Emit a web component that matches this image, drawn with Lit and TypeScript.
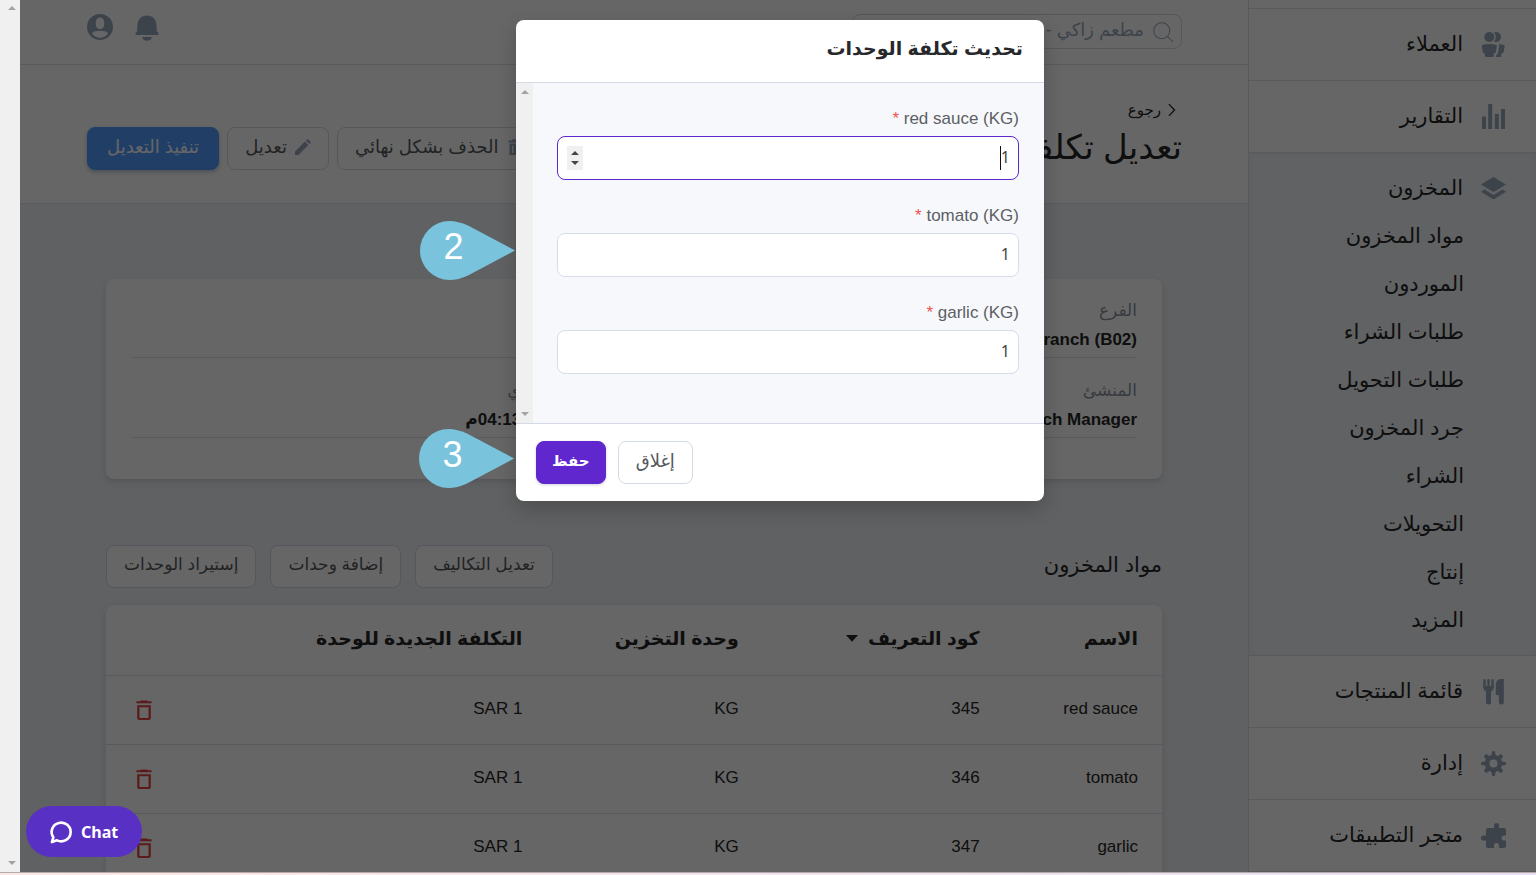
import { LitElement, html, css, svg, nothing } from "lit";
import { customElement, property } from "lit/decorators.js";

const icons: Record<string, unknown> = {
  users: svg`<circle cx="8.3" cy="5" r="5"/><path d="M0.8 13.2Q4 12 8.300 12T15.900 13.200L15 19.500Q14.800 21 14 21L13 21.500L12.500 25H4.200L3.700 21.500L2.500 21Q1.800 20.800 1.600 19.500Z"/><path d="M12.800 0.600a5 5 0 1 1 0 8.900Q14.800 7.800 14.800 5T12.800 0.600ZM18.300 12Q21.500 12 23.800 13.500L22.600 20.500L20.500 21.500L20 25H14.800L15.500 22.500L17 21.500Z"/>`,
  reports: svg`<path d="M1 12.500h4V25H1ZM7.200 0h4v25h-4ZM13.800 10h4v15h-4ZM20 5h4v20h-4Z"/>`,
  layers: svg`<path d="M12.500 1L25 8.500L12.500 16L0 8.500Z"/><path d="M3.500 13.500L12.500 19L21.500 13.500L25 15.800L12.500 23.500L0 15.800Z"/>`,
  menu: svg`<path d="M3.500 1.300v7M7.500 1.300v7M11.500 1.300v7" stroke="currentColor" stroke-width="2.400" stroke-linecap="round" fill="none"/><path d="M2.300 7H12.700Q12.700 11.500 10 12.500V23a2.500 2.500 0 0 1-5 0V12.500Q2.300 11.500 2.300 7ZM22.800 0V23a2.500 2.500 0 0 1-5 0V16H14.800V5Q15.500 0 20 0Z"/>`,
  gear: svg`<path fill-rule="evenodd" d="M11 0.500Q12.500-0.500 14 0.500L14.600 4L16.700 4.900L19.600 2.900Q21.500 3.500 22.100 5.400L20.100 8.300L21 10.400L24.500 11Q25.500 12.500 24.500 14L21 14.600L20.100 16.700L22.100 19.600Q21.500 21.500 19.600 22.100L16.700 20.100L14.600 21L14 24.500Q12.500 25.500 11 24.500L10.400 21L8.300 20.100L5.400 22.100Q3.500 21.500 2.900 19.600L4.900 16.700L4 14.600L0.500 14Q-0.500 12.500 0.500 11L4 10.400L4.900 8.300L2.900 5.400Q3.500 3.500 5.400 2.900L8.300 4.900L10.400 4ZM12.500 8.500a4 4 0 1 0 0 8a4 4 0 1 0 0-8Z"/>`,
  puzzle: svg`<path d="M7 5H13V2.500a2.500 2.500 0 0 1 5 0V5H23Q25 5 25 7V12.500H23a2.500 2.500 0 0 0 0 5H25V23Q25 25 23 25H18V22.500a2.500 2.500 0 0 0-5 0V25H7Q5 25 5 23V17.500H2.500a2.500 2.500 0 0 1 0-5H5V7Q5 5 7 5Z"/>`,
  bell: svg`<path d="M12.500 1.500C6.800 1.500 3.800 5.500 3.400 10L3 16.500L1.500 18V20.300H23.500V18L22 16.500L21.600 10C21.200 5.500 18.200 1.500 12.500 1.500ZM7.800 22H17.200A4.800 4.600 0 0 1 7.800 22Z"/>`,
  avatar: svg`<path fill-rule="evenodd" d="M12.500 0a12.500 12.500 0 1 0 0 25a12.500 12.500 0 1 0 0-25ZM12.500 3.300a4 4.200 0 0 1 4 4.200v2.800a4 4.200 0 0 1-8 0V7.500a4 4.200 0 0 1 4-4.200ZM4.800 18.500Q7 16.200 12.500 16.200T20.200 18.500Q17.500 22.800 12.500 22.800T4.800 18.500Z"/>`,
  search: svg`<g fill="none" stroke="currentColor" stroke-width="1.300"><circle cx="11" cy="11" r="10"/><path d="M18 18L25 25"/></g>`,
  back: svg`<path d="M7 2L17 12.500L7 23" fill="none" stroke="currentColor" stroke-width="2.400"/>`,
  pencil: svg`<path d="M0 25V19.500L15.500 4L21 9.500L5.500 25ZM17 2.500L18.800 0.700Q19.800 0 20.800 0.700L24.300 4.200Q25 5.200 24.300 6.200L22.500 8Z"/>`,
  bin: svg`<path fill-rule="evenodd" d="M8.500 0.500H16.500V2.500H22.500V5.500H2.500V2.500H8.500ZM4 7H21V25H4ZM8 10V22H10V10ZM15 10V22H17V10Z"/>`,
  trash: svg`<path fill-rule="evenodd" d="M8.700 0.500H16.300L17.500 1.700H22V4.200H3V1.700H7.500ZM4 6.500H21V22.500Q21 25 18.500 25H6.500Q4 25 4 22.500ZM6.800 9V22.500H18.200V9Z"/>`,
  chat: svg`<path d="M2.200 24L3.800 18.500A10.800 10.600 0 1 1 8 22L2.200 24Z" fill="none" stroke="currentColor" stroke-width="3" stroke-linejoin="round"/>`,
  sort: svg`<path d="M0 4H25L12.500 18Z"/>`,
  up: svg`<path d="M0 19L12.500 6L25 19Z"/>`,
  down: svg`<path d="M0 6H25L12.500 19Z"/>`,
};

const icon = (name: string, cls: string) =>
  html`<svg class="icon ${cls}" viewBox="0 0 25 25" fill="currentColor" aria-hidden="true">${icons[name]}</svg>`;

const shared = css`
  * { box-sizing: border-box; }
  .icon { display: block; flex: none; overflow: visible; }
  button, input { font: inherit; color: inherit; margin: 0; }
  a { color: inherit; text-decoration: none; }
  .btn {
    display: flex; align-items: center; gap: 8px; height: 43px; padding: 0 17px 3px;
    border: 1px solid #d4dae6; border-radius: 8px; background: #fff; color: #55585c;
    font-size: 17px; line-height: 24px; white-space: nowrap;
  }
  .btn.large { font-size: 18px; }
`;

@customElement("side-nav")
class SideNav extends LitElement {
  static styles = [shared, css`
    :host { display: block; width: 288px; flex: none; background: #fff; border-left: 1px solid #dde2ec; color: #262626; font-size: 21px; line-height: 28px; overflow: hidden; }
    .stub { height: 9px; border-bottom: 1px solid #dde2ec; }
    .item { display: flex; align-items: center; gap: 18px; height: 72px; padding-right: 30px; border-bottom: 1px solid #dde2ec; }
    .item span { padding-bottom: 2px; }
    .nav-icon { width: 25px; height: 25px; color: #9aa9bb; }
    .group { background: #f1f4f9; border-bottom: 1px solid #dde2ec; box-shadow: inset 0 2px 4px #e6eaf1; padding-bottom: 11px; }
    .group .item { height: 59px; padding-top: 12px; border: 0; }
    .sub { display: flex; align-items: center; height: 48px; padding-right: 72px; }
  `];
  private row(name: string, label: string) {
    return html`<a class="item" href="#">${icon(name, "nav-icon")}<span>${label}</span></a>`;
  }
  render() {
    const subs = ["مواد المخزون", "الموردون", "طلبات الشراء", "طلبات التحويل", "جرد المخزون", "الشراء", "التحويلات", "إنتاج", "المزيد"];
    return html`<nav>
      <div class="stub"></div>
      ${this.row("users", "العملاء")}${this.row("reports", "التقارير")}
      <div class="group">
        ${this.row("layers", "المخزون")}
        ${subs.map((s) => html`<a class="sub" href="#">${s}</a>`)}
      </div>
      ${this.row("menu", "قائمة المنتجات")}${this.row("gear", "إدارة")}${this.row("puzzle", "متجر التطبيقات")}
    </nav>`;
  }
}

@customElement("cost-page")
class CostPage extends LitElement {
  static styles = [shared, css`
    :host { display: block; flex: 1; min-width: 0; background: #eff2f6; color: #262626; overflow: hidden; }
    .topbar { display: flex; align-items: flex-start; justify-content: space-between; height: 65px; padding: 14px 66px 0 67px; background: #fff; border-bottom: 1px solid #dde2ec; color: #9aa9bb; }
    .search { display: flex; align-items: center; gap: 9px; width: 330px; height: 35px; padding: 0 8px; border: 1px solid #d4dae6; border-radius: 8px; }
    .search input { flex: 1; min-width: 0; border: 0; padding: 0 0 3px; background: none; outline: 0; font-size: 18px; }
    .s20 { width: 20px; height: 20px; }
    .tools { display: flex; gap: 21px; }
    .tools .icon { width: 26px; height: 26px; }
    .head { display: flex; align-items: flex-end; justify-content: space-between; height: 139px; padding: 0 66px 33px 67px; background: #fff; border-bottom: 1px solid #dde2ec; }
    .back { display: flex; align-items: center; gap: 4px; font-size: 15px; line-height: 24px; padding-right: 3px; }
    .s14 { width: 14px; height: 14px; }
    .title { height: 72px; }
    h1 { margin: 0; font-size: 34px; line-height: 50px; font-weight: 400; }
    .actions { display: flex; flex-direction: row-reverse; gap: 8px; }
    .s16 { width: 16px; height: 16px; color: #9aa9bb; }
    .btn.primary { background: #539eff; border-color: #539eff; color: #fff; padding: 0 19px 3px; box-shadow: 0 2px 4px #b9c4d4; }
    .content { padding: 75px 86px 0; }
    .card { background: #fff; border-radius: 8px; box-shadow: 0 3px 6px #cdd3dc; }
    .info { display: grid; grid-template-columns: 1fr 1fr; grid-template-rows: 63px 80px; column-gap: 44px; padding: 16px 25px 41px; }
    .field { display: flex; flex-direction: column; align-items: flex-start; justify-content: flex-end; border-bottom: 1px solid #dde2ec; font-size: 17px; }
    .label { color: #8c93a1; line-height: 26px; }
    .value { font-weight: 700; line-height: 24px; padding: 4px 0 5px; }
    .bar { display: flex; align-items: center; justify-content: space-between; margin: 66px 0 17px; }
    h2 { margin: 0; padding-bottom: 4px; font-size: 21px; line-height: 28px; font-weight: 400; }
    .bar .actions { gap: 14px; }
    table { width: 100%; border-collapse: collapse; table-layout: fixed; font-size: 17px; line-height: 24px; }
    .c1 { width: 15%; } .c2 { width: 22.8%; } .c3 { width: 20.5%; } .c4 { width: 27%; }
    th, td { text-align: right; padding: 0 24px 2px; white-space: nowrap; }
    th { height: 70px; font-size: 19px; padding-bottom: 2px; }
    td { height: 69px; border-top: 1px solid #dde2ec; }
    .sorted { display: flex; align-items: center; gap: 10px; }
    .s12 { width: 12px; height: 12px; }
    .del { display: block; margin-inline-start: auto; padding: 0 4px; border: 0; background: none; color: #e34545; }
    td:last-child { padding: 0 24px; }
  `];
  render() {
    const rows = [["red sauce", "345"], ["tomato", "346"], ["garlic", "347"]];
    return html`
      <header class="topbar">
        <label class="search">${icon("search", "s20")}<input aria-label="بحث" value="مطعم زاكي - "></label>
        <div class="tools">${icon("bell", "")}${icon("avatar", "")}</div>
      </header>
      <div class="head">
        <div class="title"><a class="back" href="#">${icon("back", "s14")}رجوع</a><h1>تعديل تكلفة</h1></div>
        <div class="actions">
          <button class="btn large primary">تنفيذ التعديل</button>
          <button class="btn large">${icon("pencil", "s16")}تعديل</button>
          <button class="btn large">${icon("bin", "s16")}الحذف بشكل نهائي</button>
        </div>
      </div>
      <main class="content">
        <section class="card info">
          <div class="field"><span class="label">الفرع</span><bdi class="value">Branch (B02)</bdi></div>
          <div class="field"></div>
          <div class="field"><span class="label">المنشئ</span><bdi class="value">Branch Manager</bdi></div>
          <div class="field"><span class="label">التاريخ الميلادي</span><span class="value">2022-11-23 04:13م</span></div>
        </section>
        <div class="bar">
          <h2>مواد المخزون</h2>
          <div class="actions">
            <button class="btn">إستيراد الوحدات</button>
            <button class="btn">إضافة وحدات</button>
            <button class="btn">تعديل التكاليف</button>
          </div>
        </div>
        <section class="card">
          <table>
            <colgroup><col class="c1"><col class="c2"><col class="c3"><col class="c4"><col></colgroup>
            <thead><tr><th>الاسم</th><th><span class="sorted">كود التعريف ${icon("sort", "s12")}</span></th><th>وحدة التخزين</th><th>التكلفة الجديدة للوحدة</th><th></th></tr></thead>
            <tbody>${rows.map(([n, c]) => html`<tr><td>${n}</td><td>${c}</td><td>KG</td><td><bdi dir="ltr">SAR 1</bdi></td>
              <td><button class="del" aria-label="حذف">${icon("trash", "s20")}</button></td></tr>`)}</tbody>
          </table>
        </section>
      </main>`;
  }
}

@customElement("cost-dialog")
class CostDialog extends LitElement {
  static styles = [shared, css`
    :host { display: block; width: 528px; }
    .dialog { background: #fff; border-radius: 8px; overflow: hidden; box-shadow: 0 8px 20px rgba(0, 0, 0, 0.2); }
    h3 { margin: 0; height: 63px; padding: 14px 21px 0; font-size: 19px; line-height: 30px; color: #26282b; border-bottom: 1px solid #d4dae6; }
    .body { display: flex; background: #f7f8fc; height: 340px; }
    .fields { flex: 1; padding: 24px 25px 0 24px; }
    .track { width: 17px; display: flex; flex-direction: column; justify-content: space-between; align-items: center; padding: 5px 0; background: #f0f0f0; color: #a3a3a3; }
    .s8 { width: 8px; height: 8px; }
    .field { margin-bottom: 24px; }
    label { display: block; height: 29px; font-size: 17px; line-height: 24px; color: #5c5f63; }
    .req { color: #f05252; }
    .box { position: relative; }
    input { display: block; width: 100%; height: 44px; padding: 0 8px 2px; border: 1px solid #d8dce9; border-radius: 8px; background: #fff; outline: 0; color: #444; font-family: "Noto Sans", sans-serif; font-size: 16px; appearance: textfield; }
    input::-webkit-inner-spin-button { display: none; }
    .active input { border-color: #5f27cd; }
    .caret { position: absolute; right: 18px; top: 10px; width: 1px; height: 24px; background: #111; }
    .spin { position: absolute; left: 10px; top: 10px; width: 16px; height: 24px; display: flex; flex-direction: column; justify-content: center; align-items: center; gap: 2px; background: #f0f0f0; color: #444; }
    footer { display: flex; justify-content: flex-end; gap: 12px; padding: 17px 20px; border-top: 1px solid #d4dae6; }
    .save { background: #5f27cd; border-color: #5f27cd; color: #fff; font-size: 15px; font-weight: 700; padding: 0 15px 3px; box-shadow: 0 1px 3px #cfd2de; }
  `];
  render() {
    return html`<div class="dialog" role="dialog" aria-labelledby="title">
      <h3 id="title">تحديث تكلفة الوحدات</h3>
      <div class="body">
        <div class="fields">${["red sauce (KG)", "tomato (KG)", "garlic (KG)"].map((name, i) => html`
          <div class="field">
            <label for="cost${i}"><bdi>${name}</bdi> <span class="req">*</span></label>
            <div class="box ${i === 0 ? "active" : ""}">
              <input id="cost${i}" type="number" value="1">
              ${i === 0 ? html`<span class="caret"></span><span class="spin">${icon("up", "s8")}${icon("down", "s8")}</span>` : nothing}
            </div>
          </div>`)}</div>
        <div class="track">${icon("up", "s8")}${icon("down", "s8")}</div>
      </div>
      <footer><button class="btn large">إغلاق</button><button class="btn save">حفظ</button></footer>
    </div>`;
  }
}

@customElement("step-pin")
class StepPin extends LitElement {
  @property() step = "";
  static styles = css`
    :host { display: block; position: absolute; width: 95px; height: 59px; }
    svg { display: block; width: 100%; height: 100%; }
    span { position: absolute; left: 0; top: 6px; width: 67px; text-align: center; font-size: 36px; line-height: 40px; color: #fff; }
  `;
  render() {
    return html`<svg viewBox="0 0 95 59"><path d="M95 29.500L48 4.500Q38 0 29.500 0a29.500 29.500 0 0 0 0 59Q38 59 48 54.500Z" fill="#79c3dc"/></svg><span>${this.step}</span>`;
  }
}

@customElement("app-root")
class AppRoot extends LitElement {
  static styles = [shared, css`
    :host { display: flex; flex-direction: column; height: 100vh; overflow: hidden; font-family: "Liberation Sans", "DejaVu Sans", sans-serif; }
    .stage { position: relative; flex: 1; min-height: 0; display: flex; }
    .edge { width: 20px; flex: none; background: #f0f0f0; color: #a3a3a3; display: flex; flex-direction: column; justify-content: space-between; align-items: flex-start; padding: 4px 4px 5px; }
    .s8 { width: 8px; height: 8px; }
    .scrim { position: absolute; inset: 0 0 0 20px; background: rgba(0, 0, 0, 0.6); display: flex; justify-content: center; align-items: flex-start; padding: 20px 0 0 4px; }
    .pin2 { left: 420px; top: 221px; }
    .pin3 { left: 419px; top: 429px; }
    .chat { position: absolute; left: 26px; bottom: 15px; display: flex; align-items: center; gap: 9px; height: 51px; padding: 0 24px; border: 0; border-radius: 26px; background: #5930c4; color: #fff; font: 700 16px/24px "Noto Sans", sans-serif; }
    .s22 { width: 22px; height: 22px; }
    .foot { height: 3px; flex: none; border-top: 1px solid #b5a9ab; background: linear-gradient(90deg, #fde8e4, #e6e0f5); }
  `];
  render() {
    return html`
      <div class="stage" dir="rtl" lang="ar">
        <side-nav></side-nav>
        <cost-page></cost-page>
        <div class="edge">${icon("up", "s8")}${icon("down", "s8")}</div>
        <div class="scrim"><cost-dialog></cost-dialog></div>
        <step-pin class="pin2" step="2"></step-pin>
        <step-pin class="pin3" step="3"></step-pin>
        <button class="chat">Chat${icon("chat", "s22")}</button>
      </div>
      <div class="foot"></div>`;
  }
}
